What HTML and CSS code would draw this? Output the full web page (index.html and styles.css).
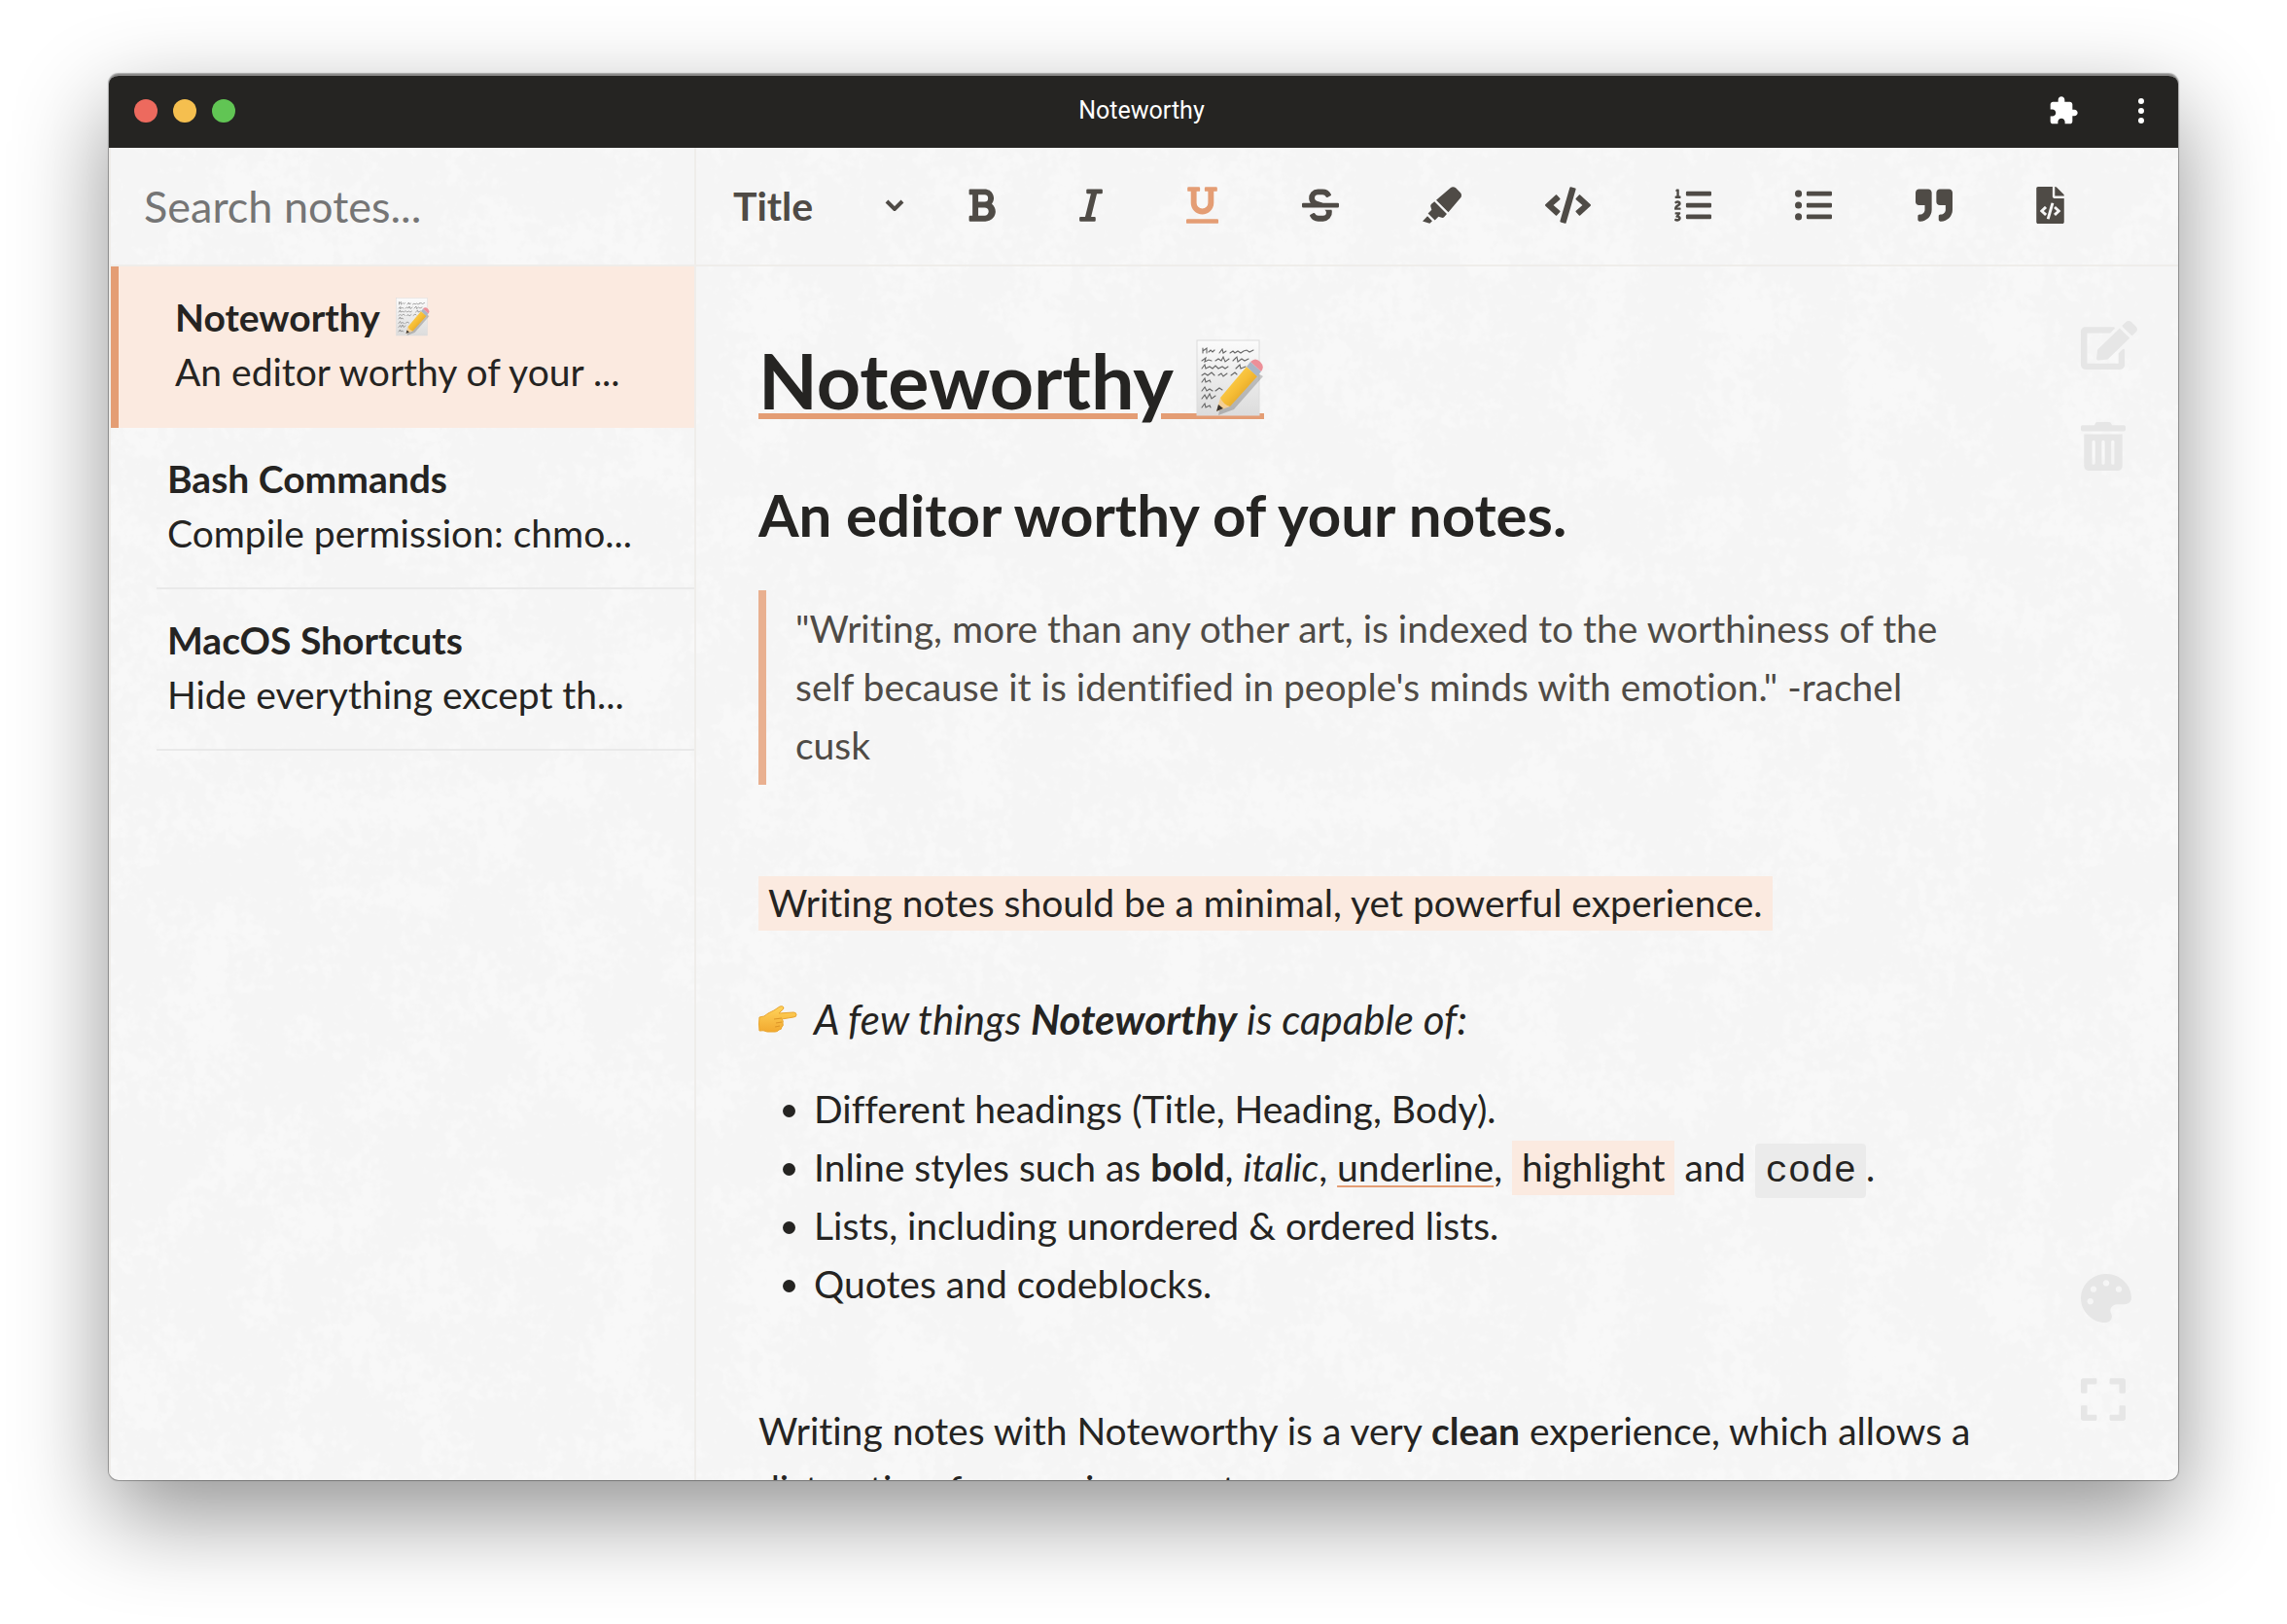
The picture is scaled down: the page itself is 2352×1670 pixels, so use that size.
FILE: index.html
```html
<!DOCTYPE html>
<html lang="en">
<head>
<meta charset="utf-8">
<title>Noteworthy</title>
<link rel="stylesheet" href="styles.css">
</head>
<body>
<svg class="defs" aria-hidden="true">
  <defs>
    <linearGradient id="paper" x1="0" y1="0" x2="0" y2="1"><stop offset="0" stop-color="#fbfbfb"/><stop offset="1" stop-color="#dcdcdc"/></linearGradient>
    <linearGradient id="pencil" x1="0" y1="0" x2="1" y2="1"><stop offset="0" stop-color="#ffdf6b"/><stop offset=".5" stop-color="#f6bd35"/><stop offset="1" stop-color="#c98a1c"/></linearGradient>
    <linearGradient id="skin" x1="0" y1="0" x2="0" y2="1"><stop offset="0" stop-color="#ffd45c"/><stop offset="1" stop-color="#f2a92f"/></linearGradient>
    <symbol id="memo" viewBox="0 0 70 80">
      <rect x="1" y="1" width="64" height="77" fill="url(#paper)" stroke="#dcdcdc"/>
      <g fill="none" stroke="#666" stroke-width="1.1" stroke-linecap="round">
        <path d="M7 9v5M7 12l4-3v5M13 13l2-2 2 2 2-2M24 14l3-4 1 4 3-2M35 14l3-2 2 2 3-2 3 2 3-2 M49 12l3-1 3 2 4-2"/>
        <path d="M6 22l4-3-1 4 4-2 3 1M20 22l3-2 3 2 2-4 2 5 4-3M38 22l4-4 1 5 4-3 3 2 4-2"/>
        <path d="M6 30l3-4 1 4 4-2 3 2 3-3 3 3 4-2 3 2 3-2M41 30l4-4 1 4 5-2"/>
        <path d="M6 37l3-2 3 2 4-3 3 3M23 37l3-2 2 3 4-3M36 37l4-3 2 2"/>
        <path d="M6 44l3-4 1 4 4-2 1 2M6 53l3-4 2 4 3-2 3 2M20 53l4-3 3 2"/>
        <path d="M6 61l3-4 2 4 3-5 2 5 4-3M6 70l3-4 1 4 4-2 1 2"/>
      </g>
      <path d="M23 78l3-15 32-31 11 6-30 34z" fill="#000" opacity=".2"/>
      <path d="M21 74l4-14 10 9z" fill="#f3cf96"/><path d="M21 74l2-7 5 4z" fill="#3a3430"/>
      <path d="M25 60l27-32 11 10-28 31q-7-2-10-9z" fill="url(#pencil)"/>
      <path d="M52 28l4-5 11 10-4 5z" fill="#a9b6c6"/>
      <path d="M56 23q5-5 10 0 5 5 1 10z" fill="#ec8f98"/>
    </symbol>
    <symbol id="point" viewBox="0 0 40 30">
      <path d="M1 13q5 0 9-4l6-3 6-4q3-1 4 1 0 2-3 4l-2 2 15-1q3 0 3 2.500t-3 2.500l-12 2q2 2 1 4 1 3-1 4 0 3-3 3-1 2-4 2H9q-4-2-8-1-1-7 0-14z" fill="url(#skin)" stroke="#e9a52f"/>
      <path d="M16 15l8-1M18 19l6-1M17 23l5-1" fill="none" stroke="#dd9526"/>
    </symbol>
  </defs>
</svg>
<div class="window">
  <header class="titlebar">
    <div class="lights">
      <button class="light close" aria-label="Close"></button>
      <button class="light minimise" aria-label="Minimise"></button>
      <button class="light zoom" aria-label="Zoom"></button>
    </div>
    <h1 class="app-name">Noteworthy</h1>
    <div class="bar-actions">
      <button aria-label="Extensions"><svg width="32" height="32" viewBox="0 0 24 24"><path d="M20.5 11H19V7c0-1.1-.9-2-2-2h-4V3.500C13 2.120 11.880 1 10.500 1S8 2.120 8 3.500V5H4c-1.100 0-1.990.9-1.990 2v3.800H3.500c1.490 0 2.700 1.210 2.700 2.700s-1.210 2.700-2.700 2.700H2V20c0 1.100.9 2 2 2h3.800v-1.500c0-1.490 1.210-2.700 2.700-2.700s2.700 1.210 2.700 2.700V22H17c1.100 0 2-.9 2-2v-4h1.500c1.380 0 2.500-1.120 2.500-2.500S21.880 11 20.500 11z"/></svg></button>
      <button aria-label="Menu"><svg width="8" height="32" viewBox="0 0 8 32"><circle cx="4" cy="6" r="3"/><circle cx="4" cy="16" r="3"/><circle cx="4" cy="26" r="3"/></svg></button>
    </div>
  </header>
  <div class="workspace">
    <aside class="sidebar">
      <input class="search" type="search" placeholder="Search notes..." aria-label="Search notes">
      <ul class="notes">
        <li><a class="note active" href="#noteworthy"><strong>Noteworthy <svg class="emoji-small" role="img" aria-label="memo"><use href="#memo"/></svg></strong><span>An editor worthy of your ...</span></a></li>
        <li><a class="note" href="#bash"><strong>Bash Commands</strong><span>Compile permission: chmo...</span></a></li>
        <li><a class="note" href="#macos"><strong>MacOS Shortcuts</strong><span>Hide everything except th...</span></a></li>
      </ul>
    </aside>
    <main class="editor">
      <div class="toolbar">
        <div class="style-picker">
          <select aria-label="Text style"><option>Title</option><option>Heading</option><option>Body</option></select>
          <svg width="20" height="12" viewBox="0 0 20 12"><path d="M2 2l8 8 8-8" fill="none" stroke="currentColor" stroke-width="4"/></svg>
        </div>
        <div class="tools">
          <button aria-label="Bold"><svg width="29" height="38" viewBox="0 0 384 512"><path d="M333.490 238a122 122 0 0 0 27-65.210C367.870 96.490 308 32 233.420 32H34a16 16 0 0 0-16 16v48a16 16 0 0 0 16 16h31.870v288H34a16 16 0 0 0-16 16v48a16 16 0 0 0 16 16h209.320c70.800 0 134.140-51.750 141-122.400 4.740-48.450-16.390-92.060-50.830-119.600zM145.660 112h87.760a48 48 0 0 1 0 96h-87.760zm87.760 288h-87.760V288h87.760a56 56 0 0 1 0 112z"/></svg></button>
          <button aria-label="Italic"><svg width="24" height="38" viewBox="0 0 320 512"><path d="M320 48v32a16 16 0 0 1-16 16h-62.760l-80 320H208a16 16 0 0 1 16 16v32a16 16 0 0 1-16 16H16a16 16 0 0 1-16-16v-32a16 16 0 0 1 16-16h62.760l80-320H112a16 16 0 0 1-16-16V48a16 16 0 0 1 16-16h192a16 16 0 0 1 16 16z"/></svg></button>
          <button class="on" aria-label="Underline" aria-pressed="true"><svg width="33" height="38" viewBox="0 0 448 512"><path d="M32 64h32v160c0 88.220 71.780 160 160 160s160-71.780 160-160V64h32a16 16 0 0 0 16-16V16a16 16 0 0 0-16-16H272a16 16 0 0 0-16 16v32a16 16 0 0 0 16 16h32v160a80 80 0 0 1-160 0V64h32a16 16 0 0 0 16-16V16a16 16 0 0 0-16-16H32a16 16 0 0 0-16 16v32a16 16 0 0 0 16 16zm400 384H16a16 16 0 0 0-16 16v32a16 16 0 0 0 16 16h416a16 16 0 0 0 16-16v-32a16 16 0 0 0-16-16z"/></svg></button>
          <button aria-label="Strikethrough"><svg width="38" height="38" viewBox="0 0 512 512"><path d="M496 224H293.900l-87.170-26.830A43.550 43.550 0 0 1 219.550 112h66.790A49.890 49.890 0 0 1 331 139.580a16 16 0 0 0 21.460 7.150l42.940-21.470a16 16 0 0 0 7.160-21.460l-.53-1A128 128 0 0 0 287.510 32h-68a123.680 123.680 0 0 0-123 135.640c2 20.890 10.100 39.830 21.780 56.360H16a16 16 0 0 0-16 16v32a16 16 0 0 0 16 16h480a16 16 0 0 0 16-16v-32a16 16 0 0 0-16-16zm-180.240 96A43 43 0 0 1 336 356.450 43.590 43.590 0 0 1 292.450 400h-66.790A49.890 49.890 0 0 1 181 372.420a16 16 0 0 0-21.460-7.150l-42.940 21.470a16 16 0 0 0-7.160 21.460l.53 1A128 128 0 0 0 224.490 480h68a123.680 123.680 0 0 0 123-135.640 114.250 114.250 0 0 0-5.340-24.360z"/></svg></button>
          <button aria-label="Highlight"><svg width="40" height="38" viewBox="0 0 544 512"><path d="M0 479.980L99.920 512l35.450-35.450-67.040-67.040L0 479.980zm124.610-240.010a36.592 36.592 0 0 0-10.790 38.100l13.050 42.830-50.930 50.940 96.230 96.230 50.860-50.860 42.740 13.080c13.730 4.200 28.650-.01 38.150-10.780l35.550-41.640-173.340-173.340-41.520 35.440zm403.310-160.700l-63.200-63.200c-20.490-20.490-53.380-21.520-75.120-2.350L190.550 183.680l169.770 169.780L530.270 154.400c19.180-21.740 18.150-54.630-2.350-75.130z"/></svg></button>
          <button aria-label="Inline code"><svg width="47" height="38" viewBox="0 0 640 512"><path d="M278.900 511.500l-61-17.700c-6.400-1.800-10-8.500-8.200-14.900L346.200 8.700c1.800-6.400 8.500-10 14.900-8.200l61 17.700c6.400 1.800 10 8.500 8.200 14.900L293.800 503.300c-1.900 6.400-8.500 10.100-14.900 8.200zm-114-112.200l43.500-46.400c4.600-4.900 4.300-12.700-.8-17.200L117 256l90.600-79.700c5.100-4.500 5.500-12.300.8-17.200l-43.500-46.400c-4.500-4.800-12.100-5.100-17-.5L3.800 247.200c-5.100 4.700-5.100 12.800 0 17.500l144.100 135.100c4.900 4.600 12.500 4.400 17-.5zm327.200.6l144.100-135.100c5.100-4.700 5.100-12.800 0-17.500L492.100 112.100c-4.800-4.500-12.400-4.300-17 .5L431.600 159c-4.600 4.900-4.300 12.700.8 17.200L523 256l-90.600 79.700c-5.100 4.500-5.500 12.300-.8 17.200l43.500 46.400c4.500 4.900 12.100 5.100 17 .6z"/></svg></button>
          <button aria-label="Numbered list"><svg width="38" height="38" viewBox="0 0 512 512"><path d="M61.770 401l17.500-20.150a19.920 19.920 0 0 0 5.070-14.190v-3.310C84.340 356 80.500 352 73 352H16a8 8 0 0 0-8 8v16a8 8 0 0 0 8 8h22.830a157.410 157.410 0 0 0-11 12.310l-5.610 7c-4 5.070-5.250 10.130-2.800 14.880l1.050 1.930c3 5.760 6.290 7.880 12.250 7.880h4.730c10.330 0 15.940 2.440 15.940 9.090 0 4.720-4.200 8.220-14.360 8.220a41.540 41.540 0 0 1-15.470-3.120c-6.490-3.880-11.740-3.500-15.600 3.120l-5.590 9.310c-3.720 6.130-3.190 11.720 2.630 15.940 7.710 4.690 20.380 9.440 37 9.440 34.160 0 48.500-22.750 48.500-44.120-.03-14.380-9.120-29.760-28.730-34.880zM496 224H176a16 16 0 0 0-16 16v32a16 16 0 0 0 16 16h320a16 16 0 0 0 16-16v-32a16 16 0 0 0-16-16zm0-160H176a16 16 0 0 0-16 16v32a16 16 0 0 0 16 16h320a16 16 0 0 0 16-16V80a16 16 0 0 0-16-16zm0 320H176a16 16 0 0 0-16 16v32a16 16 0 0 0 16 16h320a16 16 0 0 0 16-16v-32a16 16 0 0 0-16-16zM16 160h64a8 8 0 0 0 8-8v-16a8 8 0 0 0-8-8H64V40a8 8 0 0 0-8-8H32a8 8 0 0 0-7.140 4.420l-8 16A8 8 0 0 0 24 64h8v64H16a8 8 0 0 0-8 8v16a8 8 0 0 0 8 8zm-3.910 160H80a8 8 0 0 0 8-8v-16a8 8 0 0 0-8-8H41.320c3.290-10.290 48.340-18.680 48.340-56.440 0-29.060-25-39.560-44.470-39.560-21.360 0-33.800 10-40.460 18.750-4.370 5.590-3 10.840 2.800 15.370l8.580 6.880c5.610 4.560 11 2.470 16.120-2.440a13.440 13.440 0 0 1 9.460-3.840c3.330 0 9.280 1.560 9.280 8.750C51 248.190 0 257.310 0 304.590v4C0 316 5.080 320 12.090 320z"/></svg></button>
          <button aria-label="Bulleted list"><svg width="38" height="38" viewBox="0 0 512 512"><path d="M48 48a48 48 0 1 0 48 48 48 48 0 0 0-48-48zm0 160a48 48 0 1 0 48 48 48 48 0 0 0-48-48zm0 160a48 48 0 1 0 48 48 48 48 0 0 0-48-48zm448 16H176a16 16 0 0 0-16 16v32a16 16 0 0 0 16 16h320a16 16 0 0 0 16-16v-32a16 16 0 0 0-16-16zm0-320H176a16 16 0 0 0-16 16v32a16 16 0 0 0 16 16h320a16 16 0 0 0 16-16V80a16 16 0 0 0-16-16zm0 160H176a16 16 0 0 0-16 16v32a16 16 0 0 0 16 16h320a16 16 0 0 0 16-16v-32a16 16 0 0 0-16-16z"/></svg></button>
          <button aria-label="Quote"><svg width="38" height="38" viewBox="0 0 512 512"><path d="M464 32H336c-26.500 0-48 21.500-48 48v128c0 26.500 21.500 48 48 48h80v64c0 35.300-28.700 64-64 64h-8c-13.300 0-24 10.700-24 24v48c0 13.300 10.700 24 24 24h8c88.400 0 160-71.600 160-160V80c0-26.500-21.500-48-48-48zm-288 0H48C21.500 32 0 53.500 0 80v128c0 26.500 21.500 48 48 48h80v64c0 35.300-28.700 64-64 64h-8c-13.300 0-24 10.700-24 24v48c0 13.300 10.700 24 24 24h8c88.400 0 160-71.600 160-160V80c0-26.500-21.500-48-48-48z"/></svg></button>
          <button aria-label="Code block"><svg width="29" height="38" viewBox="0 0 384 512"><path d="M384 121.941V128H256V0h6.059c6.365 0 12.470 2.529 16.971 7.029l97.941 97.941A24.005 24.005 0 0 1 384 121.941zM248 160c-13.200 0-24-10.800-24-24V0H24C10.745 0 0 10.745 0 24v464c0 13.255 10.745 24 24 24h336c13.255 0 24-10.745 24-24V160H248zM123.206 400.505a5.400 5.400 0 0 1-7.633.246l-.134-.129-64.866-60.812a5.400 5.400 0 0 1 0-7.879l64.866-60.812a5.400 5.400 0 0 1 7.633.246l19.579 20.885a5.400 5.400 0 0 1-.372 7.747L101.650 336l40.763 35.874a5.400 5.400 0 0 1 .372 7.747l-19.579 20.884zm51.295 50.479l-27.453-7.970a5.402 5.402 0 0 1-3.681-6.692l61.440-211.626a5.402 5.402 0 0 1 6.692-3.681l27.452 7.970a5.400 5.400 0 0 1 3.680 6.692l-61.440 211.626a5.397 5.397 0 0 1-6.690 3.681zm160.792-111.045l-64.866 60.812a5.400 5.400 0 0 1-7.633-.246l-19.580-20.885a5.400 5.400 0 0 1 .372-7.747L284.350 336l-40.763-35.874a5.400 5.400 0 0 1-.372-7.747l19.580-20.885a5.400 5.400 0 0 1 7.633-.246l64.866 60.812a5.400 5.400 0 0 1-.001 7.879z"/></svg></button>
        </div>
      </div>
      <div class="page">
        <article class="document">
          <h2 class="doc-title"><span>Noteworthy </span><svg class="emoji-large" viewBox="0 0 76 82" role="img" aria-label="memo"><path d="M0 76h76v6H0z" fill="#e49d74"/><use href="#memo" x="6" width="70" height="80"/></svg></h2>
          <h3 class="doc-heading">An editor worthy of your notes.</h3>
          <blockquote>"Writing, more than any other art, is indexed to the worthiness of the self because it is identified in people's minds with emotion." -rachel cusk</blockquote>
          <p class="lead"><mark>Writing notes should be a minimal, yet powerful experience.</mark></p>
          <p class="intro"><svg class="emoji-hand" role="img" aria-label="pointing right"><use href="#point"/></svg><em>A few things <strong>Noteworthy</strong> is capable of:</em></p>
          <ul class="features">
            <li>Different headings (Title, Heading, Body).</li>
            <li>Inline styles such as <strong>bold</strong>, <em>italic</em>, <u>underline</u>, <mark>highlight</mark> and <code>code</code>.</li>
            <li>Lists, including unordered &amp; ordered lists.</li>
            <li>Quotes and codeblocks.</li>
          </ul>
          <p>Writing notes with Noteworthy is a very <strong>clean</strong> experience, which allows a distraction-free environment.</p>
        </article>
        <div class="side-tools">
          <div>
            <button aria-label="New note"><svg width="58" height="50" viewBox="0 0 576 512" preserveAspectRatio="none"><path d="M402.600 83.200l90.200 90.200c3.800 3.800 3.800 10 0 13.800L274.400 405.600l-92.800 10.300c-12.400 1.400-22.900-9.100-21.500-21.500l10.300-92.800L388.800 83.200c3.800-3.800 10-3.800 13.800 0zm162-22.900l-48.800-48.800c-15.200-15.200-39.900-15.200-55.200 0l-35.400 35.400c-3.800 3.800-3.800 10 0 13.800l90.200 90.200c3.800 3.800 10 3.800 13.800 0l35.400-35.400c15.200-15.300 15.200-40 0-55.200zM384 346.200V448H64V128h229.800c3.200 0 6.200-1.300 8.500-3.500l40-40c7.600-7.600 2.200-20.500-8.500-20.500H48C21.500 64 0 85.500 0 112v352c0 26.500 21.500 48 48 48h352c26.500 0 48-21.500 48-48V306.200c0-10.700-12.900-16-20.500-8.500l-40 40c-2.200 2.300-3.500 5.300-3.500 8.500z"/></svg></button>
            <button aria-label="Delete note"><svg width="46" height="50" viewBox="0 0 448 512" preserveAspectRatio="none"><path d="M32 464a48 48 0 0 0 48 48h288a48 48 0 0 0 48-48V128H32zm272-256a16 16 0 0 1 32 0v224a16 16 0 0 1-32 0zm-96 0a16 16 0 0 1 32 0v224a16 16 0 0 1-32 0zm-96 0a16 16 0 0 1 32 0v224a16 16 0 0 1-32 0zM432 32H312l-9.400-18.700A24 24 0 0 0 281.100 0H166.800a23.720 23.720 0 0 0-21.400 13.300L136 32H16A16 16 0 0 0 0 48v32a16 16 0 0 0 16 16h416a16 16 0 0 0 16-16V48a16 16 0 0 0-16-16z"/></svg></button>
          </div>
          <div>
            <button aria-label="Theme"><svg width="52" height="50" viewBox="0 0 512 512" preserveAspectRatio="none"><path d="M204.300 5C104.900 24.400 24.800 104.300 5.200 203.400c-37 187 131.700 326.400 258.800 306.700 41.200-6.400 61.400-54.600 42.500-91.700-23.100-45.400 9.900-98.400 60.900-98.400h79.700c35.800 0 64.800-29.600 64.900-65.300C511.500 97.100 368.100-26.900 204.300 5zM96 320c-17.700 0-32-14.300-32-32s14.300-32 32-32 32 14.300 32 32-14.300 32-32 32zm32-128c-17.700 0-32-14.300-32-32s14.300-32 32-32 32 14.300 32 32-14.300 32-32 32zm128-64c-17.700 0-32-14.300-32-32s14.300-32 32-32 32 14.300 32 32-14.300 32-32 32zm128 64c-17.700 0-32-14.300-32-32s14.300-32 32-32 32 14.300 32 32-14.300 32-32 32z"/></svg></button>
            <button aria-label="Full screen"><svg width="46" height="50" viewBox="0 0 448 512" preserveAspectRatio="none"><path d="M0 180V56c0-13.300 10.700-24 24-24h124c6.600 0 12 5.400 12 12v40c0 6.600-5.400 12-12 12H64v84c0 6.600-5.400 12-12 12H12c-6.600 0-12-5.400-12-12zM288 44v40c0 6.600 5.400 12 12 12h84v84c0 6.600 5.400 12 12 12h40c6.600 0 12-5.400 12-12V56c0-13.300-10.700-24-24-24H300c-6.600 0-12 5.400-12 12zm148 276h-40c-6.600 0-12 5.400-12 12v84h-84c-6.600 0-12 5.400-12 12v40c0 6.600 5.400 12 12 12h124c13.300 0 24-10.700 24-24V332c0-6.600-5.400-12-12-12zM160 468v-40c0-6.600-5.400-12-12-12H64v-84c0-6.600-5.400-12-12-12H12c-6.600 0-12 5.400-12 12v124c0 13.300 10.700 24 24 24h124c6.600 0 12-5.400 12-12z"/></svg></button>
          </div>
        </div>
      </div>
    </main>
  </div>
</div>
</body>
</html>
```
FILE: styles.css
```css
:root {
  --ink: #252422;
  --soft-ink: #4f4b46;
  --accent: #e49d74;
  --tint: #fbeae0;
  --line: #efedea;
}

* { box-sizing: border-box; }

body {
  margin: 0;
  min-height: 100vh;
  padding: 76px 112px 148px;
  background: #fff;
  color: var(--ink);
  font: 39px/60px Lato, sans-serif;
  font-variant-ligatures: no-common-ligatures;
}

button {
  display: block;
  padding: 0;
  border: 0;
  background: none;
  color: inherit;
}

svg { display: block; fill: currentColor; }
.defs { position: absolute; width: 0; height: 0; }

.window {
  display: flex;
  flex-direction: column;
  height: calc(100vh - 224px);
  border-top: 2px solid #8b8a89;
  border-radius: 10px;
  overflow: hidden;
  background: #f5f5f5;
  box-shadow: 0 0 1px 1px rgba(0, 0, 0, .3), 0 36px 96px rgba(0, 0, 0, .43);
}

/* Title bar */
.titlebar {
  display: grid;
  grid-template-columns: 1fr auto 1fr;
  align-items: center;
  flex: none;
  height: 74px;
  padding: 0 30px 2px 26px;
  background: var(--ink);
  color: #fff;
}
.lights { display: flex; gap: 16px; }
.light { width: 24px; height: 24px; border-radius: 50%; }
.close { background: #ed6a5e; }
.minimise { background: #f5bf4f; }
.zoom { background: #61c554; }
.app-name { margin: 0; font: 400 25px/32px Roboto, sans-serif; }
.bar-actions { display: flex; justify-content: flex-end; gap: 60px; padding-right: 4px; }

/* Paper grain behind the sidebar and the editor */
.workspace {
  display: grid;
  grid-template-columns: 604px minmax(0, 1fr);
  flex: 1;
  min-height: 0;
  background-image: url("data:image/svg+xml,%3Csvg xmlns='http://www.w3.org/2000/svg' width='1000' height='1000'%3E%3Cfilter id='g' x='0' y='0' width='1' height='1'%3E%3CfeTurbulence type='fractalNoise' baseFrequency='.014' numOctaves='3' seed='4' stitchTiles='stitch' result='a'/%3E%3CfeTurbulence type='fractalNoise' baseFrequency='.1' numOctaves='3' seed='9' stitchTiles='stitch' result='b'/%3E%3CfeComposite in='a' in2='b' operator='arithmetic' k2='.55' k3='.45'/%3E%3CfeColorMatrix values='0 0 0 0 1 0 0 0 0 1 0 0 0 0 1 0 0 0 7 -3.4'/%3E%3C/filter%3E%3Crect width='1000' height='1000' filter='url(%23g)' opacity='.35'/%3E%3C/svg%3E");
}

/* Sidebar */
.sidebar {
  border-left: 2px solid var(--line);
  border-right: 2px solid var(--line);
}
.search {
  display: block;
  width: 100%;
  height: 122px;
  padding: 0 34px;
  border: 0;
  border-bottom: 2px solid var(--line);
  background: none;
  color: var(--ink);
  font: 45px/60px Lato, sans-serif;
  appearance: none;
}
.search::placeholder { color: #757575; opacity: 1; }
.notes { margin: 0; padding: 0; list-style: none; }
.note {
  display: flex;
  flex-direction: column;
  height: 166px;
  margin-left: 47px;
  padding: 24px 0 0 11px;
  border-bottom: 2px solid #e9e9e9;
  color: inherit;
  line-height: 56px;
  text-decoration: none;
  white-space: nowrap;
}
.note.active {
  margin-left: 0;
  padding-left: 58px;
  border-left: 8px solid var(--accent);
  border-bottom: 0;
  background: var(--tint);
}
.note strong { display: flex; align-items: center; gap: 16px; }
.emoji-small { width: 35px; height: 40px; }

/* Toolbar */
.editor { display: flex; flex-direction: column; min-width: 0; min-height: 0; }
.toolbar {
  display: flex;
  align-items: center;
  gap: 65px;
  flex: none;
  height: 122px;
  padding: 0 38px 2px;
  border-bottom: 2px solid var(--line);
  color: var(--soft-ink);
}
.style-picker { display: grid; align-items: center; width: 176px; }
.style-picker > * { grid-area: 1 / 1; }
.style-picker select {
  width: 100%;
  padding: 2px 0 0;
  border: 0;
  background: none;
  color: inherit;
  font: 700 41px/60px Lato, sans-serif;
  appearance: none;
}
.style-picker svg { justify-self: end; pointer-events: none; }
.tools { display: flex; align-items: center; gap: 86px; }
.on { color: var(--accent); }

/* Document */
.page {
  display: grid;
  grid-template-columns: minmax(0, 1fr) 100px;
  gap: 80px;
  flex: 1;
  min-height: 0;
  padding-left: 64px;
}
.document { min-height: 0; overflow: hidden; }
.doc-title {
  display: flex;
  align-items: flex-end;
  margin: 67px 0 0;
  font-size: 79px;
  line-height: 100px;
  white-space: pre;
}
.doc-title span {
  text-decoration: underline var(--accent) 6px;
  text-underline-offset: 4px;
}
.emoji-large { width: 76px; height: 82px; margin-bottom: 10px; }
.doc-heading { margin: 48px 0 38px; font-size: 60px; line-height: 80px; }
blockquote {
  margin: 0;
  padding: 9px 50px 11px 30px;
  border-left: 8px solid #e9b090;
  color: #4f4b46;
}
.document p { margin: 0; }
.document .lead { margin: 91px 0 60px; }
mark { padding: 4px 10px 6px; background: var(--tint); color: inherit; }
.document .intro { display: flex; align-items: center; gap: 17px; font-size: 42px; }
.emoji-hand { width: 40px; height: 30px; }
.features { margin: 32px 0 91px; padding-left: 57px; }
u { text-decoration: underline var(--accent) 2px; text-underline-offset: 4px; }
code {
  padding: 7px 10px 5px;
  border-radius: 4px;
  background: #ebebeb;
  font: 39px "Liberation Mono", monospace;
}

.side-tools {
  display: flex;
  flex-direction: column;
  justify-content: space-between;
  padding: 56px 0 58px;
  color: #e6e6e6;
}
.side-tools div { display: grid; gap: 54px; }
```
